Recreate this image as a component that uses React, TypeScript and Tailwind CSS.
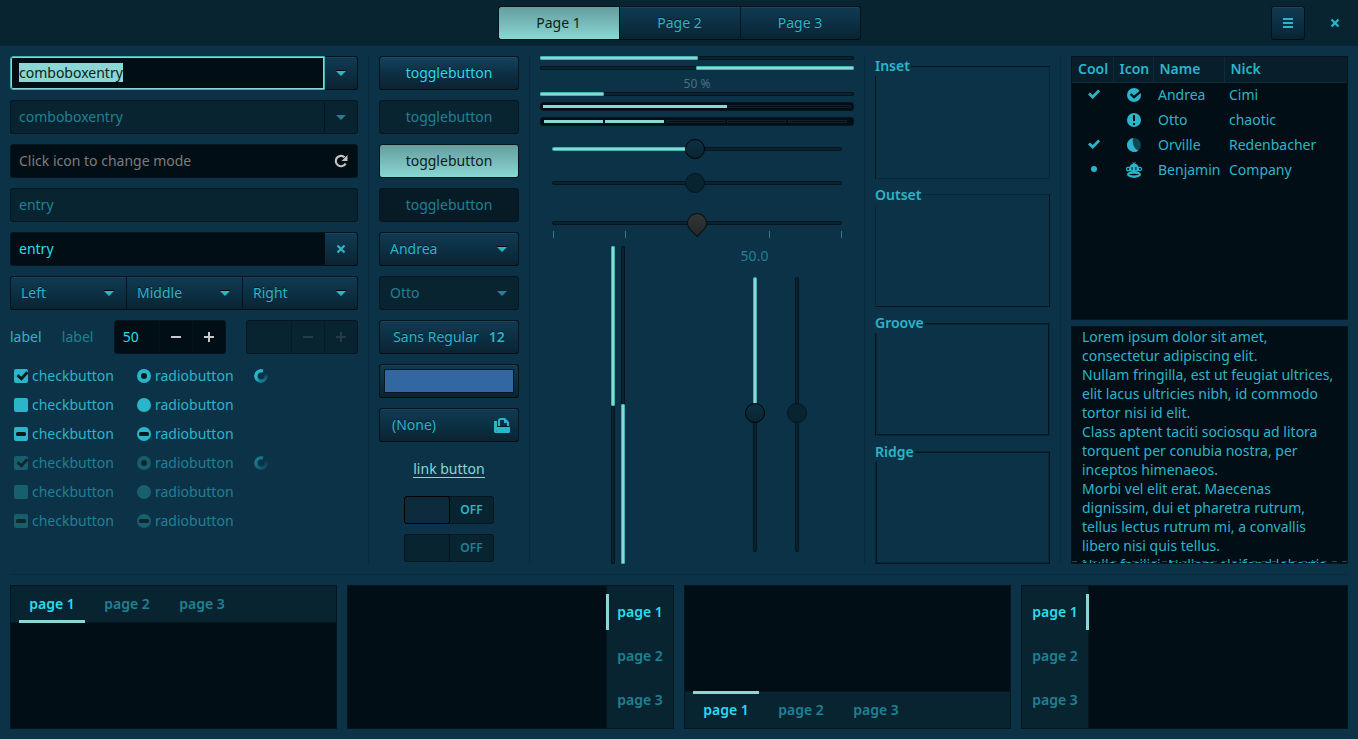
import { useEffect, useRef, useState } from "react";
import type { CSSProperties, ReactNode } from "react";

const raised =
  "rounded-[3px] border border-[#02131b] border-b-[#010a0f] bg-linear-to-b from-[#103a52] via-[#0c3044] to-[#092432] shadow-[inset_0_1px_rgba(255,255,255,0.05)] [text-shadow:0_-1px_rgba(0,0,0,0.6)]";
const flatDisabled = "rounded-[3px] border border-[#04161f] bg-[#092431]";
const pressed =
  "rounded-[3px] border border-[#02131b] bg-linear-to-b from-[#649e9d] to-[#8ad7d4] text-[#0f1c20]";
const entryBase = "h-[34px] w-full min-w-0 rounded-[3px] border px-2 pb-[2px] outline-none";

function Caret({ dim = false }: { dim?: boolean }) {
  return (
    <svg viewBox="0 0 10 6" className="h-[6px] w-[10px]" aria-hidden="true">
      {!dim && <path d="M0 0h10v1H0z" fill="#01080c" />}
      <path d="M0 1h10L5 6z" fill={dim ? "#1f8194" : "#2bb5ca"} />
    </svg>
  );
}

function CrossIcon({ className }: { className: string }) {
  return (
    <svg viewBox="0 0 10 10" className={className} aria-hidden="true">
      <path d="M1.5 1.5 8.5 8.5M8.5 1.5 1.5 8.5" stroke="#2bb5ca" strokeWidth="2.2" />
    </svg>
  );
}

function Combo({ label, options, disabled = false, shape = "rounded-[3px]" }: { label: string; options: string[]; disabled?: boolean; shape?: string }) {
  return (
    <div className="grid min-w-0 flex-1 items-center">
      <select
        aria-label={label}
        disabled={disabled}
        className={`col-start-1 row-start-1 h-[34px] w-full appearance-none pr-7 pl-[10px] opacity-100 outline-none ${disabled ? flatDisabled + " text-[#1f8194]" : raised + " text-[#2bb5ca]"} ${shape}`}
      >
        {options.map((o) => (
          <option key={o}>{o}</option>
        ))}
      </select>
      <span className="pointer-events-none col-start-1 row-start-1 mr-3 justify-self-end">
        <Caret dim={disabled} />
      </span>
    </div>
  );
}

function ComboEntry({ disabled = false }: { disabled?: boolean }) {
  return (
    <div className="flex">
      {disabled ? (
        <input aria-label="Disabled combo entry" disabled defaultValue="comboboxentry" className={`${entryBase} rounded-r-none border-r-0 border-[#04161f] bg-[#092431] text-[#1f8194]`} />
      ) : (
        <div className="grid min-w-0 flex-1 items-center rounded-l-[3px] border border-[#41b4b2] bg-[#020e15] inset-ring inset-ring-[#8ad7d4]">
          <ComboText />
        </div>
      )}
      <button
        aria-label="Show choices"
        disabled={disabled}
        className={`grid h-[34px] shrink-0 place-items-center ${disabled ? flatDisabled : raised} rounded-l-none ${disabled ? "w-[34px]" : "w-[33px] border-l-0"}`}
      >
        <Caret dim={disabled} />
      </button>
    </div>
  );
}

function ComboText() {
  const ref = useRef<HTMLInputElement>(null);
  useEffect(() => {
    ref.current?.focus();
    ref.current?.select();
  }, []);
  return (
    <input
      ref={ref}
      aria-label="Combo entry"
      defaultValue="comboboxentry"
      className="h-8 w-full min-w-0 bg-transparent px-2 pb-[2px] text-[#2adcf0] outline-none selection:bg-[#8ad7d4] selection:text-[#0f1c20]"
    />
  );
}

function Spin({ value, disabled = false }: { value: string; disabled?: boolean }) {
  const [v, setV] = useState(value);
  const step = (d: number) => setV(String(Number(v) + d));
  const sign = disabled ? "#263b45" : "#c8c8c8";
  const btn = `grid w-[33px] shrink-0 place-items-center border-l ${disabled ? "border-[#061b26]" : "border-[#04121a]"}`;
  return (
    <div className={`flex h-[34px] w-28 min-w-0 rounded-[3px] border border-[#04161f] ${disabled ? "bg-[#092431]" : "bg-[#020e15]"}`}>
      <input
        aria-label={disabled ? "Disabled amount" : "Amount"}
        disabled={disabled}
        value={v}
        onChange={(e) => setV(e.target.value)}
        className="w-full min-w-0 flex-1 bg-transparent px-2 text-[#2adcf0] outline-none"
      />
      <button aria-label="Decrease" disabled={disabled} className={btn} onClick={() => step(-1)}>
        <svg viewBox="0 0 10 10" className="size-[10px]"><path d="M0 4h10v2H0z" fill={sign} /></svg>
      </button>
      <button aria-label="Increase" disabled={disabled} className={btn} onClick={() => step(1)}>
        <svg viewBox="0 0 10 10" className="size-[10px]"><path d="M0 4h4V0h2v4h4v2H6v4H4V6H0z" fill={sign} /></svg>
      </button>
    </div>
  );
}

type Mark = "on" | "off" | "mixed";

function Tick({ type, mark, disabled }: { type: "checkbox" | "radio"; mark: Mark; disabled: boolean }) {
  const [state, setState] = useState<Mark>(mark);
  const ink = disabled ? "#10262b" : "#0f1719";
  const next = () => setState(type === "radio" || state !== "on" ? "on" : "off");
  return (
    <label className={`flex items-center gap-1 ${disabled ? "text-[#1f8194]" : "text-[#2bb5ca]"}`}>
      <span className="grid size-[14px] shrink-0">
        <input
          type={type}
          checked={state === "on"}
          onChange={next}
          disabled={disabled}
          className={`col-start-1 row-start-1 size-[14px] appearance-none ${type === "radio" ? "rounded-full" : "rounded-[2px]"} ${disabled ? "bg-[#185f6d]" : "bg-[#2bb5ca]"}`}
        />
        <svg viewBox="0 0 14 14" className="pointer-events-none col-start-1 row-start-1 size-[14px] overflow-visible" aria-hidden="true">
          {state === "mixed" && <rect x="2" y="5" width="10" height="4" rx="1.6" fill={ink} />}
          {state === "on" && type === "radio" && <circle cx="7" cy="7" r="3" fill={ink} />}
          {state === "on" && type === "checkbox" && <path d="M3.5 6.2 7.4 9.8 13.4 3.2" fill="none" stroke={ink} strokeWidth="2.8" />}
        </svg>
      </span>
      {type === "checkbox" ? "checkbutton" : "radiobutton"}
    </label>
  );
}

function Spinner({ dim }: { dim: boolean }) {
  return (
    <span
      className={`size-[14px] rounded-full bg-[conic-gradient(from_25deg,transparent_0deg,transparent_35deg,#17566b_75deg,#1d7e93_160deg,#2bb5ca_230deg,#2bb5ca_355deg,transparent_360deg)] [mask:radial-gradient(circle,transparent_3px,black_4px)] ${dim ? "opacity-50" : ""}`}
    />
  );
}

const trackX =
  "[&::-webkit-slider-runnable-track]:h-1 [&::-webkit-slider-runnable-track]:rounded-[2px] [&::-webkit-slider-runnable-track]:border [&::-webkit-slider-runnable-track]:border-transparent [&::-webkit-slider-runnable-track]:[background:linear-gradient(90deg,#8ad7d4_var(--fill),#092431_var(--fill))_padding-box,linear-gradient(90deg,#41b4b2_var(--fill),#02141c_var(--fill))_border-box]";
const trackY =
  "[&::-webkit-slider-runnable-track]:w-1 [&::-webkit-slider-runnable-track]:rounded-[2px] [&::-webkit-slider-runnable-track]:border [&::-webkit-slider-runnable-track]:border-transparent [&::-webkit-slider-runnable-track]:[background:linear-gradient(180deg,#8ad7d4_var(--fill),#092431_var(--fill))_padding-box,linear-gradient(180deg,#41b4b2_var(--fill),#02141c_var(--fill))_border-box]";
const thumb =
  "[&::-webkit-slider-thumb]:size-5 [&::-webkit-slider-thumb]:appearance-none [&::-webkit-slider-thumb]:rounded-full [&::-webkit-slider-thumb]:border";
const thumbOn =
  "[&::-webkit-slider-thumb]:border-black [&::-webkit-slider-thumb]:bg-linear-to-b [&::-webkit-slider-thumb]:from-[#0d2f43] [&::-webkit-slider-thumb]:to-[#092432]";
const thumbOff = "[&::-webkit-slider-thumb]:border-[#04161f] [&::-webkit-slider-thumb]:bg-[#092431]";
const thumbPin =
  "[&::-webkit-slider-thumb]:rotate-45 [&::-webkit-slider-thumb]:rounded-br-none [&::-webkit-slider-thumb]:border-[#0c0f10] [&::-webkit-slider-thumb]:bg-linear-to-br [&::-webkit-slider-thumb]:from-[#343738] [&::-webkit-slider-thumb]:to-[#262829]";

function Scale({ label, start, kind = "on", vertical = false }: { label: string; start: number; kind?: "on" | "off" | "pin"; vertical?: boolean }) {
  const [v, setV] = useState(start);
  const look = kind === "on" ? thumbOn : kind === "off" ? thumbOff : thumbPin;
  const place = vertical
    ? `${trackY} w-5 min-h-0 flex-1 [writing-mode:vertical-lr] [&::-webkit-slider-thumb]:-ml-[9px]`
    : `${trackX} h-5 w-full [&::-webkit-slider-thumb]:-mt-[9px]`;
  return (
    <input
      type="range"
      step="0.1"
      aria-label={label}
      value={v}
      disabled={kind === "off"}
      onChange={(e) => setV(Number(e.target.value))}
      style={{ "--fill": kind === "on" ? `${v}%` : "0%" } as CSSProperties}
      className={`block appearance-none bg-transparent outline-none ${place} ${thumb} ${look}`}
    />
  );
}

function Bar({ value, reverse = false, vertical = false }: { value: number; reverse?: boolean; vertical?: boolean }) {
  const length = `calc(${value}% + 1px)`;
  return (
    <div
      role="progressbar"
      aria-valuenow={value}
      className={`flex rounded-[2px] bg-[#092431] inset-ring inset-ring-[#02141c] ${vertical ? "w-1 flex-col" : "h-1"} ${reverse ? "justify-end" : ""}`}
    >
      <div
        className={`rounded-[1px] border border-[#41b4b2] bg-[#8ad7d4] ${vertical ? "w-1" : "h-1"}`}
        style={vertical ? { height: length } : { width: length }}
      />
    </div>
  );
}

function Frame({ title, look }: { title: string; look: string }) {
  return (
    <fieldset className={`min-w-0 flex-1 border ${look}`}>
      <legend className="-ml-px h-5 bg-[#0c3247] pr-px leading-5 font-semibold">{title}</legend>
    </fieldset>
  );
}

function Check() {
  return (
    <svg viewBox="0 0 12 10" className="mx-auto h-[10px] w-3" aria-label="yes">
      <path d="M1 4.4 4.7 8 11.2 1.4" fill="none" stroke="#2bb5ca" strokeWidth="2.8" />
    </svg>
  );
}

const people: { cool: ReactNode; icon: ReactNode; name: string; nick: string }[] = [
  {
    cool: <Check />,
    icon: (
      <>
        <circle cx="8" cy="8" r="7" fill="#2bb5ca" />
        <path d="M4.6 7 8 10.2 16 3.4" fill="none" stroke="#020e15" strokeWidth="2.4" />
      </>
    ),
    name: "Andrea",
    nick: "Cimi",
  },
  {
    cool: null,
    icon: (
      <>
        <circle cx="8" cy="8" r="7" fill="#2bb5ca" />
        <path d="M7 3h2v6H7zM7 11h2v2H7z" fill="#020e15" />
      </>
    ),
    name: "Otto",
    nick: "chaotic",
  },
  {
    cool: <Check />,
    icon: (
      <>
        <circle cx="8" cy="8" r="7" fill="#134652" />
        <path d="M7.2 1A7 7 0 1 0 12.4 13.4C8.4 12.4 5.6 6 7.2 1z" fill="#2bb5ca" />
      </>
    ),
    name: "Orville",
    nick: "Redenbacher",
  },
  {
    cool: (
      <svg viewBox="0 0 6 6" className="mx-auto size-[6px]" aria-label="mixed">
        <circle cx="3" cy="3" r="3" fill="#2bb5ca" />
      </svg>
    ),
    icon: (
      <>
        <path d="M6.6 0.6 8 1.6 9.6 0.4" fill="none" stroke="#2bb5ca" />
        <path d="M3 8C3 4 5 1.600 8 1.600s5 2.400 5 6.400L11.500 9.200h-7z" fill="#2bb5ca" />
        <circle cx="2.2" cy="7" r="1.7" fill="none" stroke="#2bb5ca" strokeWidth="1.2" />
        <circle cx="13.8" cy="7" r="1.7" fill="none" stroke="#2bb5ca" strokeWidth="1.2" />
        <path d="M5.600 5h1v3h-1zM9.400 5h1v3h-1z" fill="#020e15" />
        <ellipse cx="8" cy="12.4" rx="7" ry="3.500" fill="#2bb5ca" />
        <ellipse cx="8" cy="12.600" rx="4.800" ry=".8" fill="#020e15" />
      </>
    ),
    name: "Benjamin",
    nick: "Company",
  },
];

const passage = `Lorem ipsum dolor sit amet, consectetur adipiscing elit.
Nullam fringilla, est ut feugiat ultrices, elit lacus ultricies nibh, id commodo tortor nisi id elit.
Class aptent taciti sociosqu ad litora torquent per conubia nostra, per inceptos himenaeos.
Morbi vel elit erat. Maecenas dignissim, dui et pharetra rutrum, tellus lectus rutrum mi, a convallis libero nisi quis tellus.
Nulla facilisi. Nullam eleifend lobortis nisl, in porttitor tellus malesuada vitae.`;

type Side = "top" | "right" | "bottom" | "left";

const book: Record<Side, { outer: string; strip: string; line: string }> = {
  top: { outer: "flex-col", strip: "gap-[9px] px-2 border-b", line: "inset-x-0 -bottom-px h-[3px]" },
  bottom: { outer: "flex-col-reverse", strip: "gap-[9px] px-2 border-t", line: "inset-x-0 -top-px h-[3px]" },
  right: { outer: "flex-row-reverse", strip: "flex-col gap-2 py-2 border-l", line: "inset-y-0 -left-px w-[3px]" },
  left: { outer: "", strip: "flex-col gap-2 py-2 border-r", line: "inset-y-0 -right-px w-[3px]" },
};

function Notebook({ side }: { side: Side }) {
  const [page, setPage] = useState(1);
  const b = book[side];
  return (
    <div className={`flex h-36 min-w-0 flex-1 border border-[#04161f] bg-[#020e15] ${b.outer}`}>
      <div role="tablist" className={`flex shrink-0 border-[#04161f] bg-[#092431] ${b.strip}`}>
        {[1, 2, 3].map((n) => (
          <button
            key={n}
            role="tab"
            aria-selected={n === page}
            onClick={() => setPage(n)}
            className={`relative h-9 w-[66px] font-semibold ${n === page ? "text-[#2adcf0]" : "text-[#1f8194]"}`}
          >
            page {n}
            {n === page && <span className={`absolute bg-[#8ad7d4] ${b.line}`} />}
          </button>
        ))}
      </div>
      <div role="tabpanel" className="flex-1" />
    </div>
  );
}

function Switch({ disabled = false }: { disabled?: boolean }) {
  return (
    <button
      role="switch"
      aria-checked="false"
      aria-label={disabled ? "Disabled switch" : "Switch"}
      disabled={disabled}
      className={`flex h-7 w-[90px] self-center rounded-[3px] border border-[#04161f] bg-[#092431] text-xs font-semibold ${disabled ? "text-[#1f8194]" : "text-[#2bb5ca]"}`}
    >
      <span className={`-my-px -ml-px h-7 w-[46px] rounded-[3px] border ${disabled ? "border-[#04161f] bg-[#092431]" : "border-black bg-linear-to-b from-[#0b2a3b] to-[#0c2c3e]"}`} />
      <span className="flex-1 self-center">OFF</span>
    </button>
  );
}

function Rule() {
  return <div className="bg-[#0a2b3d]" />;
}

export default function App() {
  const [tab, setTab] = useState(1);
  const [toggles, setToggles] = useState([false, true]);
  const flip = (i: number) => setToggles(toggles.map((t, j) => (j === i ? !t : t)));
  const btn = "h-[34px] w-full";
  return (
    <div className="flex min-h-screen flex-col bg-[#0c3247] font-['Noto_Sans',sans-serif] text-sm leading-5 text-[#2bb5ca]">
      <header className="grid h-[46px] grid-cols-[1fr_auto_1fr] items-center border-b border-[#09273a] bg-[#092431]">
        <span />
        <nav className="flex">
          {[1, 2, 3].map((n) => (
            <button
              key={n}
              onClick={() => setTab(n)}
              className={`h-[34px] w-[121px] ${tab === n ? pressed : raised} ${n === 1 ? "rounded-r-none border-r-0" : n === 2 ? "rounded-none border-r-0" : "rounded-l-none"}`}
            >
              Page {n}
            </button>
          ))}
        </nav>
        <div className="flex items-center justify-end gap-[6px] pr-[6px]">
          <button aria-label="Menu" className={`grid size-[34px] place-items-center ${raised}`}>
            <svg viewBox="0 0 10 10" className="size-[10px]">
              <path d="M0 0h10v2H0zM0 4h10v2H0zM0 8h10v2H0z" fill="#2bb5ca" />
            </svg>
          </button>
          <span className="h-[34px] w-px bg-[#082030]" />
          <button aria-label="Close" className="grid size-[34px] place-items-center">
            <CrossIcon className="size-[10px]" />
          </button>
        </div>
      </header>

      <main className="flex flex-1 flex-col gap-[10px] p-[10px]">
        <div className="grid flex-1 grid-cols-[minmax(0,348fr)_1px_minmax(0,140fr)_1px_minmax(0,314fr)_1px_minmax(0,175fr)_1px_minmax(0,277fr)] gap-x-[10px]">
          <section className="flex flex-col gap-[10px]">
            <ComboEntry />
            <ComboEntry disabled />
            <div className="flex h-[34px] items-center rounded-[3px] border border-[#04161f] bg-[#020e15] px-2">
              <input aria-label="Mode" placeholder="Click icon to change mode" className="min-w-0 flex-1 bg-transparent outline-none placeholder:text-[#7b7d7e]" />
              <button aria-label="Change mode">
                <svg viewBox="0 0 16 16" className="size-4">
                  <path d="M12.6 10.4A5.2 5.2 0 1 1 11.6 4.3" fill="none" stroke="#c4c4c4" strokeWidth="2.2" />
                  <path d="M14.5 2v6H8.5z" fill="#c4c4c4" />
                </svg>
              </button>
            </div>
            <input aria-label="Disabled entry" disabled defaultValue="entry" className={`${entryBase} border-[#04161f] bg-[#092431] text-[#1f8194]`} />
            <div className="flex">
              <input aria-label="Entry" defaultValue="entry" className={`${entryBase} rounded-r-none border-r-0 border-[#04161f] bg-[#020e15] text-[#2adcf0]`} />
              <button aria-label="Clear" className={`grid h-[34px] w-[33px] shrink-0 place-items-center ${raised} rounded-l-none border-l-0`}>
                <CrossIcon className="size-[10px]" />
              </button>
            </div>
            <div className="flex">
              <Combo label="Left" options={["Left"]} shape="rounded-r-none border-r-0" />
              <Combo label="Middle" options={["Middle"]} shape="rounded-none border-r-0" />
              <Combo label="Right" options={["Right"]} shape="rounded-l-none" />
            </div>
            <div className="flex items-center justify-between">
              <span>label</span>
              <span className="text-[#1f8194]">label</span>
              <Spin value="50" />
              <Spin value="" disabled />
            </div>
            <div className="-mt-[3px] grid auto-rows-[29px] grid-cols-[123px_117px_auto] items-center pl-1">
              {[false, true].flatMap((disabled) =>
                (["on", "off", "mixed"] as Mark[]).flatMap((mark) => [
                  <Tick key={`c${disabled}${mark}`} type="checkbox" mark={mark} disabled={disabled} />,
                  <Tick key={`r${disabled}${mark}`} type="radio" mark={mark} disabled={disabled} />,
                  mark === "on" ? <Spinner key={`s${disabled}`} dim={disabled} /> : <span key={`s${disabled}${mark}`} />,
                ]),
              )}
            </div>
          </section>
          <Rule />
          <section className="flex flex-col gap-[10px]">
            <button aria-pressed={toggles[0]} onClick={() => flip(0)} className={`${btn} ${toggles[0] ? pressed : raised + " from-[#12435f] to-[#0c3146] text-[#2adcf0]"}`}>togglebutton</button>
            <button disabled className={`${btn} ${flatDisabled} text-[#1f8194]`}>togglebutton</button>
            <button aria-pressed={toggles[1]} onClick={() => flip(1)} className={`${btn} ${toggles[1] ? pressed : raised}`}>togglebutton</button>
            <button disabled className={`${btn} rounded-[3px] border border-[#04161f] bg-[#061b26] text-[#1f8194]`}>togglebutton</button>
            <div className="flex"><Combo label="Person" options={["Andrea", "Otto"]} /></div>
            <div className="flex"><Combo label="Disabled person" options={["Otto"]} disabled /></div>
            <button className={`${btn} ${raised} flex items-center justify-center gap-[10px] whitespace-nowrap`}>
              Sans Regular <span className="font-semibold">12</span>
            </button>
            <input
              type="color"
              aria-label="Colour"
              defaultValue="#3267a1"
              className={`${btn} ${raised} appearance-none p-1 [&::-webkit-color-swatch]:rounded-none [&::-webkit-color-swatch]:border-[#04161f] [&::-webkit-color-swatch-wrapper]:p-0`}
            />
            <button className={`${btn} ${raised} flex items-center justify-between pr-2 pl-3`}>
              (None)
              <svg viewBox="0 0 16 16" className="size-4" aria-hidden="true">
                <path d="M4 9V3l2-2h5l4 4v4z" fill="#2bb5ca" />
                <path d="M6 3h4v3h3v3H6z" fill="#0c3044" />
                <path d="M0 4h3v9l-1 3H1l-1-1z" fill="#2bb5ca" />
                <path d="M3 9h12v1H3z" fill="#04141c" />
                <path d="M3 10h13v5l-1 1H1l2-2z" fill="#2bb5ca" />
              </svg>
            </button>
            <div className="flex h-[34px] items-center justify-center">
              <a href="#link" className="border-b border-[#8ad7d4] leading-4 text-[#8ad7d4]">link button</a>
            </div>
            <Switch />
            <Switch disabled />
          </section>
          <Rule />
          <section className="flex flex-col">
            <div className="flex flex-col gap-[6px]">
              <Bar value={50} />
              <Bar value={50} reverse />
              <div>
                <div className="h-4 text-center text-xs leading-4 text-[#4d7080]">50 %</div>
                <Bar value={20} />
              </div>
              <div className="flex h-[9px] items-center rounded-[3px] border border-[#04161f] bg-[#020e15] px-[2px]">
                <div className="flex h-[3px] flex-1 border border-[#12222a]">
                  <div className="-my-px -ml-px h-[3px] w-3/5 bg-[#8ad7d4]" />
                </div>
              </div>
              <div className="grid h-[9px] grid-cols-5 items-center gap-[2px] rounded-[3px] border border-[#04161f] bg-[#020e15] pr-[6px] pl-[3px]">
                {[1, 2, 3, 4, 5].map((n) => (
                  <span key={n} className={`h-[3px] ${n < 3 ? "bg-[#8ad7d4]" : "border border-[#12222a]"}`} />
                ))}
              </div>
            </div>
            <div className="flex flex-col px-3 pt-[13px]">
              <Scale label="Scale" start={49.3} />
              <div className="h-[14px]" />
              <Scale label="Disabled scale" start={49.3} kind="off" />
              <div className="h-5" />
              <Scale label="Scale with marks" start={50} kind="pin" />
              <div className="flex h-[5px] items-end justify-between pl-px">
                {[0, 1, 2, 3, 4].map((n) => (
                  <span key={n} className={`w-px bg-[#1f8194] ${n === 2 ? "h-0" : "h-[7px]"}`} />
                ))}
              </div>
            </div>
            <div className="mt-2 grid flex-1 grid-cols-2">
              <div className="flex justify-center gap-[6px] pr-px">
                <Bar value={50} vertical />
                <Bar value={50} vertical reverse />
              </div>
              <div className="flex justify-center gap-4 pr-[6px] pb-3">
                <div className="flex w-8 flex-col items-center">
                  <span className="h-[31px] text-[#1f8194]">50.0</span>
                  <Scale label="Vertical scale" start={49.3} vertical />
                </div>
                <div className="flex w-5 flex-col items-center pt-[31px]">
                  <Scale label="Disabled vertical scale" start={49.3} kind="off" vertical />
                </div>
              </div>
            </div>
          </section>
          <Rule />
          <section className="flex flex-col gap-[6px]">
            <Frame title="Inset" look="border-t-[#02151e] border-l-[#02151e] border-r-[#06293a] border-b-[#06293a]" />
            <Frame title="Outset" look="border-t-[#06293a] border-l-[#06293a] border-r-[#02151e] border-b-[#02151e]" />
            <Frame title="Groove" look="border-t-[#02151e] border-l-[#02151e] border-r-[#06293a] border-b-[#06293a] shadow-[inset_1px_1px_#06293a,inset_-1px_-1px_#02151e]" />
            <Frame title="Ridge" look="border-t-[#06293a] border-l-[#06293a] border-r-[#02151e] border-b-[#02151e] shadow-[inset_1px_1px_#02151e,inset_-1px_-1px_#06293a]" />
          </section>
          <Rule />
          <section className="flex flex-col gap-[6px]">
            <div className="h-[264px] border border-[#04161f] bg-[#020e15]">
              <table className="w-full table-fixed border-collapse text-left">
                <colgroup>
                  <col className="w-[41px]" />
                  <col className="w-10" />
                  <col className="w-[71px]" />
                  <col />
                </colgroup>
                <thead>
                  <tr className="h-[25px] border-b border-[#0c2c3e] bg-[#081e2a]">
                    {["Cool", "Icon", "Name", "Nick"].map((h) => (
                      <th key={h} className="border-r border-[#0c2c3e] py-0 pl-[6px] font-semibold last:border-r-0">{h}</th>
                    ))}
                  </tr>
                </thead>
                <tbody>
                  {people.map((p) => (
                    <tr key={p.name} className="h-[25px]">
                      <td className="pt-0 pb-[2px] pl-[2px]">{p.cool}</td>
                      <td className="py-0 pl-[2px]">
                        <svg viewBox="0 0 16 16" className="mx-auto size-4" aria-hidden="true">{p.icon}</svg>
                      </td>
                      <td className="py-0 pl-[5px]">{p.name}</td>
                      <td className="py-0 pl-[5px]">{p.nick}</td>
                    </tr>
                  ))}
                </tbody>
              </table>
            </div>
            <div className="relative flex min-h-0 flex-1 border border-[#04161f] bg-[#020e15]">
              <textarea
                aria-label="Passage"
                defaultValue={passage}
                className="h-[236px] w-full flex-1 resize-none overflow-hidden pr-2 pl-[10px] leading-[19px] outline-none"
              />
              <span className="pointer-events-none absolute inset-x-0 bottom-px h-px bg-[repeating-linear-gradient(90deg,#3b4245_0_5px,transparent_5px_10px)]" />
            </div>
          </section>
        </div>
        <div className="h-px bg-[#0a2b3d]" />
        <div className="flex gap-[10px]">
          <Notebook side="top" />
          <Notebook side="right" />
          <Notebook side="bottom" />
          <Notebook side="left" />
        </div>
      </main>
    </div>
  );
}
